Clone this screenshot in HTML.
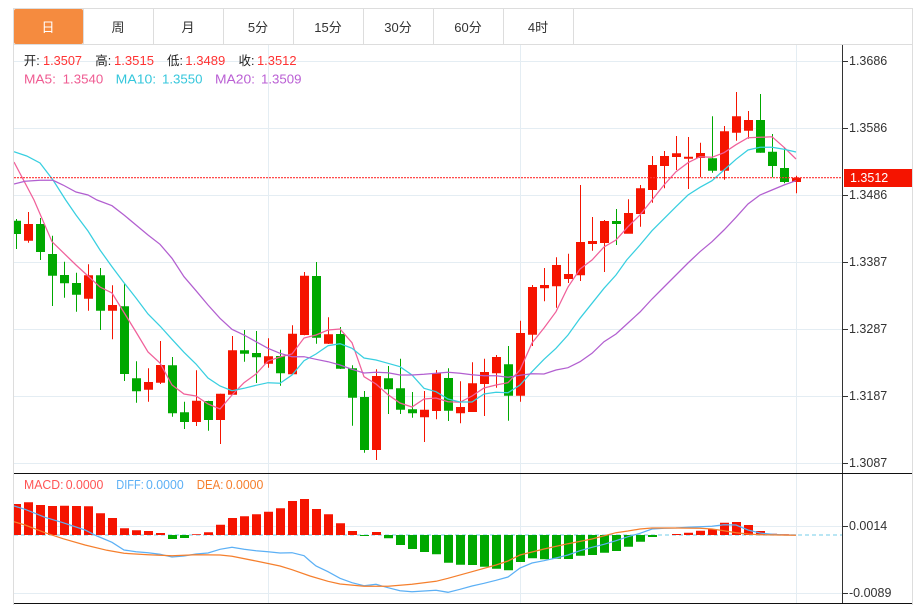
<!DOCTYPE html>
<html lang="zh">
<head>
<meta charset="utf-8">
<title>K</title>
<style>
html,body{margin:0;padding:0;background:#fff;width:919px;height:605px;overflow:hidden}
svg{display:block}
text{font-family:"Liberation Sans","Noto Sans CJK SC",sans-serif;font-size:12.5px;white-space:pre}
.tab{font-size:13px;text-anchor:middle;fill:#333}
.ax{font-size:12.5px;fill:#333}
.r{fill:#f33}.k{fill:#222}
.m5{fill:#ef5b92}.m10{fill:#36c7dc}.m20{fill:#ba5fd4}
.mc{fill:#f55}.df{fill:#5cb0f5}.de{fill:#f57f2d}
</style>
</head>
<body>
<svg width="919" height="605" viewBox="0 0 919 605" xmlns="http://www.w3.org/2000/svg">
<defs><clipPath id="c"><rect x="14" y="45" width="828" height="558"/></clipPath></defs>

<!-- frame -->
<path d="M13 8.5H913M13.5 8V605M912.5 8V605M13 44.5H913" stroke="#ddd" fill="none"/>
<path d="M83.5 9V44M153.5 9V44M223.5 9V44M293.5 9V44M363.5 9V44M433.5 9V44M503.5 9V44M573.5 9V44" stroke="#ddd" fill="none"/>
<rect x="14" y="9" width="69" height="35" rx="2" fill="#f58b3f"/>

<!-- tabs -->
<text class="tab" x="48" y="32" style="fill:#fff">日</text>
<text class="tab" x="118" y="32">周</text>
<text class="tab" x="188" y="32">月</text>
<text class="tab" x="258" y="32">5分</text>
<text class="tab" x="328" y="32">15分</text>
<text class="tab" x="398" y="32">30分</text>
<text class="tab" x="468" y="32">60分</text>
<text class="tab" x="538" y="32">4时</text>

<!-- grid -->
<path d="M14 61.5H842M14 128.5H842M14 195.5H842M14 262.5H842M14 329.5H842M14 396.5H842M14 463.5H842M14 526.5H842M14 593.5H842M268.5 45V603M520.5 45V603M796.5 45V603" stroke="#e4edf3" fill="none"/>

<g clip-path="url(#c)">
<!-- zero line -->
<path d="M14 535H842" stroke="#8fd6ee" stroke-width="1.2" stroke-dasharray="4 3" fill="none"/>

<!-- candle wicks -->
<path fill="none" stroke="#f51400" d="M28.5 212V242.7M88.5 264.3V310.7M112.5 285.3V339.3M148.5 368.3V401.7M160.5 341V384M196.5 370.3V426M220.5 393.7V444M232.5 336V395M268.5 338.3V367.7M292.5 325.3V375M304.5 272V335.3M328.5 317.3V344M376.5 369.3V460M424.5 391V442M436.5 370V419.3M460.5 381.3V423.3M472.5 362.3V412M484.5 358.7V416M496.5 355V387.7M520.5 320.7V401.7M532.5 285V346M544.5 268V301.3M556.5 257.3V307.7M568.5 253.7V283M580.5 185V281M592.5 217V250.7M604.5 220V272M628.5 199.3V226.7M640.5 185V226.7M652.5 156V202.7M664.5 151V188.3M676.5 136V170M688.5 137V189M700.5 142.7V177.3M724.5 126V179.7M736.5 92V140.7M748.5 111V138.7M796.5 175.7V193.3"/>
<path fill="none" stroke="#00a800" d="M16.5 219V249M40.5 218V260M52.5 235.7V306M64.5 261.7V297.7M76.5 272.7V311.7M100.5 268V330M124.5 283.3V381M136.5 361.3V402.7M172.5 357V416.7M184.5 401.7V429M208.5 400.7V430.7M244.5 330V361.7M256.5 331V383M280.5 349.7V385.7M316.5 262V343.7M340.5 327V369M352.5 365.3V425.7M364.5 391V452.7M388.5 366V414M400.5 358.7V414M412.5 392V417.7M448.5 368.3V421M508.5 346V420.7M616.5 209V245M712.5 116.3V172.7M760.5 94V152.7M772.5 134V177.3M784.5 147.3V183.3"/>

<!-- candle bodies -->
<path fill="#f51400" d="M24 224h9V240.7h-9zM84 275.3h9V298.7h-9zM108 305h9V310.7h-9zM144 382h9V389.7h-9zM156 365h9V382.7h-9zM192 400.7h9V422h-9zM216 393.7h9V420h-9zM228 350.3h9V394.7h-9zM264 356.3h9V363.7h-9zM288 333.7h9V374.3h-9zM300 275.7h9V335h-9zM324 334.3h9V343.7h-9zM372 376h9V450h-9zM420 409.7h9V417.3h-9zM432 373h9V411h-9zM456 407h9V413.3h-9zM468 383.3h9V412h-9zM480 372h9V384h-9zM492 357h9V373.3h-9zM516 333h9V395.7h-9zM528 287h9V334.7h-9zM540 285h9V288.3h-9zM552 265h9V286.3h-9zM564 274h9V279h-9zM576 242h9V275.3h-9zM588 241h9V244h-9zM600 221h9V243h-9zM624 213h9V233.7h-9zM636 188.3h9V214h-9zM648 165h9V190h-9zM660 156h9V166h-9zM672 153.3h9V157h-9zM684 156.7h9V158.7h-9zM696 153h9V158h-9zM720 131.3h9V170.7h-9zM732 116.3h9V132.7h-9zM744 120h9V130.7h-9zM792 177.7h9V182h-9z"/>
<path fill="#00a800" d="M12 220.7h9V234h-9zM36 224h9V252h-9zM48 254h9V275.7h-9zM60 275h9V283.3h-9zM72 283h9V294.7h-9zM96 275.3h9V310.7h-9zM120 306.3h9V374h-9zM132 378.3h9V391.3h-9zM168 365.3h9V413.3h-9zM180 412.3h9V422h-9zM204 401h9V420h-9zM240 350.3h9V353.7h-9zM252 353h9V357.3h-9zM276 356h9V373.3h-9zM312 276h9V337.7h-9zM336 334h9V368.7h-9zM348 368.3h9V397.7h-9zM360 397h9V450h-9zM384 378.3h9V389.3h-9zM396 388.3h9V409.7h-9zM408 409.3h9V413.3h-9zM444 378h9V410.7h-9zM504 364.3h9V395.7h-9zM612 221h9V224h-9zM708 158.3h9V170.7h-9zM756 120h9V152.7h-9zM768 151.7h9V166h-9zM780 168h9V182h-9z"/>

<!-- MA lines -->
<polyline fill="none" stroke="#f0609a" stroke-width="1.25" points="14,162 34,200 52,241.7 76,265 100,287 112,293 136,332 148,352 160,363 172,385 184,394 196,396 208,404 220,409 232,395 244,382.7 256,374 268,361 280,357 292,354 304,338 316,335 328,330 340,329 352,342.7 364,376.7 376,384 388,394.7 400,403 412,407 424,399 436,398 448,401.7 460,402.3 472,396 484,388 496,385 508,382.7 520,370 532,343 544,328 556,311.7 568,287 580,269 592,260 604,247 616,240 628,226.7 640,215 652,200 664,185 676,171.7 688,162.7 700,156.7 712,157.3 724,152.7 736,144.7 748,137.7 760,137.3 772,136.7 784,147.3 796,159"/>
<polyline fill="none" stroke="#38cfe0" stroke-width="1.25" points="14,151.7 26.7,156 40,163 53,180 65.7,200 76,215 88,231 100,250 112,266.7 124,282.7 136,298 148,314 160,326 172,339.3 184,352.3 196,364 208,378 220,386 232,390.7 244,388.3 256,385.3 268,382.7 280,383.3 292,375 304,360.7 316,354 328,345.7 340,343.7 352,348.3 364,358 376,360 388,363.3 400,366.7 412,375 424,388.3 436,391.7 448,399 460,402 472,402 484,394 496,392.3 508,392.7 520,385 532,371.7 544,359.3 556,348.3 568,335 580,318.3 592,303.3 604,288.3 616,275 626.7,260 640,245 652,230.7 664,218.7 676,206.7 688,195 700,187.3 712,180.7 724,170 736,159.3 748,150 760,147.3 772,147.3 784,149.3 796,152"/>
<polyline fill="none" stroke="#b25fd0" stroke-width="1.25" points="14,184 25,181.3 40,180.3 53,180.3 63,185 76,192 88,195 97,200 112,205.7 124,215 136,225 148,235 160,244.3 172,258.3 184,276.7 196,290.7 208,305 220,318.3 232,329.3 244,335 256,341.7 268,348.3 280,353.3 292,356.7 304,356.7 316,359.3 328,361.7 340,365 352,369.3 364,373 376,372.3 388,372.7 400,375 412,375 424,374.3 436,373.3 448,372.3 460,373.3 472,374.7 484,375.7 496,375.7 508,377.3 520,375.3 532,373.7 544,374 556,370 568,367.7 580,361.7 592,353.3 604,341.7 616,334 628,323 640,312 652,299 664,287 676,275 688,263 700,251.7 712,241.7 724,230 736,217.3 748,204 760,195 772,190 784,185 796,180.7"/>

<!-- last price line -->
<path d="M14 177.7H842" stroke="#f33" stroke-width="1.2" stroke-dasharray="2 1" fill="none"/>

<!-- MACD bars -->
<path fill="#f51400" d="M12 504h9V535h-9zM24 502.3h9V535h-9zM36 505h9V535h-9zM48 506h9V535h-9zM60 505.7h9V535h-9zM72 506h9V535h-9zM84 506.3h9V535h-9zM96 513.3h9V535h-9zM108 518h9V535h-9zM120 528.3h9V535h-9zM132 530.3h9V535h-9zM144 531h9V535h-9zM156 533h9V535h-9zM192 534.3h9V535h-9zM204 532.3h9V535h-9zM216 524.7h9V535h-9zM228 518h9V535h-9zM240 516.3h9V535h-9zM252 514.3h9V535h-9zM264 511.7h9V535h-9zM276 508.3h9V535h-9zM288 501h9V535h-9zM300 499h9V535h-9zM312 509h9V535h-9zM324 514.3h9V535h-9zM336 523.3h9V535h-9zM348 531h9V535h-9zM372 532h9V535h-9zM672 534h9V535h-9zM684 532.7h9V535h-9zM696 530.7h9V535h-9zM708 529h9V535h-9zM720 522.7h9V535h-9zM732 522h9V535h-9zM744 525h9V535h-9zM756 531h9V535h-9zM768 533.7h9V535h-9zM780 534.3h9V535h-9z"/>
<path fill="#00a800" d="M168 535h9V539h-9zM180 535h9V538h-9zM360 535h9V536h-9zM384 535h9V538.3h-9zM396 535h9V545h-9zM408 535h9V549h-9zM420 535h9V552h-9zM432 535h9V554.3h-9zM444 535h9V562.7h-9zM456 535h9V564.7h-9zM468 535h9V565h-9zM480 535h9V566.7h-9zM492 535h9V568.7h-9zM504 535h9V570.3h-9zM516 535h9V562h-9zM528 535h9V558.3h-9zM540 535h9V559.3h-9zM552 535h9V558.7h-9zM564 535h9V559h-9zM576 535h9V555.7h-9zM588 535h9V555h-9zM600 535h9V552.7h-9zM612 535h9V551h-9zM624 535h9V546.7h-9zM636 535h9V541.7h-9zM648 535h9V537h-9z"/>

<!-- DIFF / DEA -->
<polyline fill="none" stroke="#5cb0f5" stroke-width="1.25" points="14,506 25,509.3 45,517.3 63,522.7 85,530 97,536 112,542.3 124,550 136,551.7 148,552.7 160,554.3 172,557 184,556 196,554 208,553 220,549.3 232,547.3 244,549.3 256,550.7 268,551.7 280,553 292,552.7 304,555.7 310,561 316,566 328,571.7 340,578.3 352,582.7 364,585.7 376,584.3 388,587.7 400,590.7 412,591.7 424,591 436,590.3 448,592.3 460,589.3 472,586 484,583.3 496,580.3 508,577 520,568 532,563 544,560.7 556,558 568,555 580,550.7 592,547.3 604,544.3 616,540.7 628,536.7 640,533.3 652,529 664,528.3 676,528 688,527.3 700,526.7 712,526.3 724,524.7 736,525 748,530 760,533 772,534.3 784,535 796,535"/>
<polyline fill="none" stroke="#f57f2d" stroke-width="1.25" points="14,521.7 25,525 45,532.7 63,538.7 85,545 107,550.3 124,553.3 148,554.7 172,555.7 196,554.7 220,555 232,556.3 256,561 280,566 292,569.7 310,576 328,581.3 340,584 364,586.3 388,586.3 412,584.3 436,581.3 448,578.3 472,571.7 496,565 508,561 520,555 544,549 568,543.7 592,539 616,532.7 628,531 640,529 652,528 676,528 700,528.3 712,529 724,530.7 736,532.7 748,534 760,534.7 796,535.3"/>
</g>

<!-- legend -->
<text class="k" x="23.7" y="65">开:</text><text class="r" x="43" y="65" textLength="39" lengthAdjust="spacingAndGlyphs">1.3507</text>
<text class="k" x="95.3" y="65">高:</text><text class="r" x="114" y="65" textLength="40" lengthAdjust="spacingAndGlyphs">1.3515</text>
<text class="k" x="167" y="65">低:</text><text class="r" x="185.3" y="65" textLength="40" lengthAdjust="spacingAndGlyphs">1.3489</text>
<text class="k" x="238.5" y="65">收:</text><text class="r" x="257" y="65" textLength="39.5" lengthAdjust="spacingAndGlyphs">1.3512</text>

<text class="m5" x="24" y="83.5" textLength="32" lengthAdjust="spacingAndGlyphs">MA5:</text><text class="m5" x="62.7" y="83.5" textLength="40.5" lengthAdjust="spacingAndGlyphs">1.3540</text>
<text class="m10" x="115.7" y="83.5" textLength="40.5" lengthAdjust="spacingAndGlyphs">MA10:</text><text class="m10" x="162" y="83.5" textLength="40.5" lengthAdjust="spacingAndGlyphs">1.3550</text>
<text class="m20" x="215" y="83.5" textLength="40" lengthAdjust="spacingAndGlyphs">MA20:</text><text class="m20" x="261" y="83.5" textLength="40.5" lengthAdjust="spacingAndGlyphs">1.3509</text>

<text class="mc" x="24" y="489" textLength="39.5" lengthAdjust="spacingAndGlyphs">MACD:</text><text class="mc" x="65.7" y="489" textLength="37.7" lengthAdjust="spacingAndGlyphs">0.0000</text>
<text class="df" x="116.3" y="489" textLength="27.5" lengthAdjust="spacingAndGlyphs">DIFF:</text><text class="df" x="146" y="489" textLength="37.7" lengthAdjust="spacingAndGlyphs">0.0000</text>
<text class="de" x="196.7" y="489" textLength="26.7" lengthAdjust="spacingAndGlyphs">DEA:</text><text class="de" x="225.7" y="489" textLength="37.7" lengthAdjust="spacingAndGlyphs">0.0000</text>

<!-- axis -->
<path d="M842.5 45V603" stroke="#333" fill="none"/>
<path d="M14 473.5H912M14 603.5H912" stroke="#111" fill="none"/>
<path d="M843 61.5h5M843 128.5h5M843 195.5h5M843 262.5h5M843 329.5h5M843 396.5h5M843 463.5h5M843 526.5h5M843 593.5h5" stroke="#333" fill="none"/>
<text class="ax" x="849" y="65">1.3686</text>
<text class="ax" x="849" y="132">1.3586</text>
<text class="ax" x="849" y="199">1.3486</text>
<text class="ax" x="849" y="266">1.3387</text>
<text class="ax" x="849" y="333">1.3287</text>
<text class="ax" x="849" y="400">1.3187</text>
<text class="ax" x="849" y="467">1.3087</text>
<text class="ax" x="849" y="530">0.0014</text>
<text class="ax" x="849" y="597">-0.0089</text>

<!-- price tag -->
<rect x="844" y="169" width="68" height="18" fill="#f51400"/>
<text class="ax" x="850" y="182" style="fill:#fff">1.3512</text>
</svg>
</body>
</html>
